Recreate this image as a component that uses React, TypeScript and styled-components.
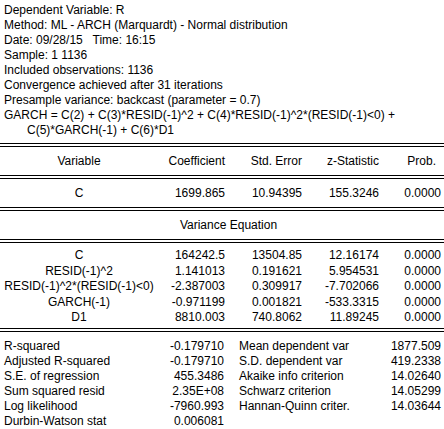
import React from "react";
import styled, { createGlobalStyle } from "styled-components";

const GlobalStyle = createGlobalStyle`
  html, body {
    margin: 0;
    padding: 0;
    background: #ffffff;
  }
  body {
    font-family: "Liberation Sans", Arial, sans-serif;
    font-size: 12px;
    color: #000000;
  }
`;

const info = [
  "Dependent Variable: R",
  "Method: ML - ARCH (Marquardt) - Normal distribution",
  "Date: 09/28/15   Time: 16:15",
  "Sample: 1 1136",
  "Included observations: 1136",
  "Convergence achieved after 31 iterations",
  "Presample variance: backcast (parameter = 0.7)",
  "GARCH = C(2) + C(3)*RESID(-1)^2 + C(4)*RESID(-1)^2*(RESID(-1)<0) +",
];

const varianceRows = [
  ["C", "164242.5", "13504.85", "12.16174", "0.0000"],
  ["RESID(-1)^2", "1.141013", "0.191621", "5.954531", "0.0000"],
  ["RESID(-1)^2*(RESID(-1)<0)", "-2.387003", "0.309917", "-7.702066", "0.0000"],
  ["GARCH(-1)", "-0.971199", "0.001821", "-533.3315", "0.0000"],
  ["D1", "8810.003", "740.8062", "11.89245", "0.0000"],
];

const stats = [
  ["R-squared", "-0.179710", "Mean dependent var", "1877.509"],
  ["Adjusted R-squared", "-0.179710", "S.D. dependent var", "419.2338"],
  ["S.E. of regression", "455.3486", "Akaike info criterion", "14.02640"],
  ["Sum squared resid", "2.35E+08", "Schwarz criterion", "14.05299"],
  ["Log likelihood", "-7960.993", "Hannan-Quinn criter.", "14.03644"],
  ["Durbin-Watson stat", "0.006081", "", ""],
];

export default function App() {
  return (
    <>
      <GlobalStyle />
      <Page>
        <Info>
          {info.map((line) => (
            <InfoLine key={line}>{line}</InfoLine>
          ))}
          <InfoLine $indent>C(5)*GARCH(-1) + C(6)*D1</InfoLine>
        </Info>

        <DoubleRule />
        <TableRow $tall>
          <Cell $align="center">Variable</Cell>
          <Cell>Coefficient</Cell>
          <Cell>Std. Error</Cell>
          <Cell>z-Statistic</Cell>
          <Cell $pad={5}>Prob.</Cell>
        </TableRow>
        <DoubleRule />
        <TableRow $tall>
          <Cell $align="center">C</Cell>
          <Cell>1699.865</Cell>
          <Cell>10.94395</Cell>
          <Cell>155.3246</Cell>
          <Cell>0.0000</Cell>
        </TableRow>
        <DoubleRule />
        <SectionTitle>Variance Equation</SectionTitle>
        <DoubleRule />

        <VarianceBlock>
          {varianceRows.map((r) => (
            <TableRow key={r[0]}>
              <Cell $align="center">{r[0]}</Cell>
              <Cell>{r[1]}</Cell>
              <Cell>{r[2]}</Cell>
              <Cell>{r[3]}</Cell>
              <Cell>{r[4]}</Cell>
            </TableRow>
          ))}
        </VarianceBlock>
        <DoubleRule />

        <StatsGrid>
          {stats.map((s) => (
            <React.Fragment key={s[0]}>
              <StatLabel>{s[0]}</StatLabel>
              <StatValue>{s[1]}</StatValue>
              <StatLabel $second>{s[2]}</StatLabel>
              <StatValue>{s[3]}</StatValue>
            </React.Fragment>
          ))}
        </StatsGrid>
        <SingleRule />
      </Page>
    </>
  );
}

const Page = styled.div`
  width: 444px;
  height: 429px;
  overflow: hidden;
  background: #ffffff;
`;

const Info = styled.div`
  padding: 3px 0 0 4px;
  margin-bottom: 5px;
`;

const InfoLine = styled.div<{ $indent?: boolean }>`
  height: 15px;
  line-height: 15px;
  white-space: pre;
  padding-left: ${(p) => (p.$indent ? "23px" : "0")};
`;

const DoubleRule = styled.div`
  height: 2px;
  border-top: 1px solid #000000;
  border-bottom: 1px solid #000000;
`;

const SingleRule = styled.div`
  height: 0;
  border-top: 1px solid #000000;
`;

const TableRow = styled.div<{ $tall?: boolean }>`
  display: grid;
  grid-template-columns: 158px 67px 77px 77px 62px;
  padding-right: 3px;
  align-items: center;
  height: ${(p) => (p.$tall ? "26px" : "15.5px")};
  margin: ${(p) => (p.$tall ? "1px 0" : "0")};
  line-height: 15px;
`;

const Cell = styled.div<{ $align?: "center" | "right"; $pad?: number }>`
  text-align: ${(p) => p.$align ?? "right"};
  padding-right: ${(p) => p.$pad ?? 0}px;
  white-space: nowrap;
`;

const SectionTitle = styled.div`
  height: 26px;
  margin: 1px 0;
  display: flex;
  align-items: center;
  justify-content: center;
  padding-left: 13px;
`;

const VarianceBlock = styled.div`
  padding: 5px 0 2.5px;
`;

const StatsGrid = styled.div`
  display: grid;
  grid-template-columns: 146px 74px 1fr 80px;
  grid-auto-rows: 15px;
  align-items: center;
  padding: 7px 3px 4px 4px;
  line-height: 15px;
`;

const StatLabel = styled.div<{ $second?: boolean }>`
  white-space: nowrap;
  padding-left: ${(p) => (p.$second ? "15px" : "0")};
`;

const StatValue = styled.div`
  text-align: right;
  white-space: nowrap;
`;
